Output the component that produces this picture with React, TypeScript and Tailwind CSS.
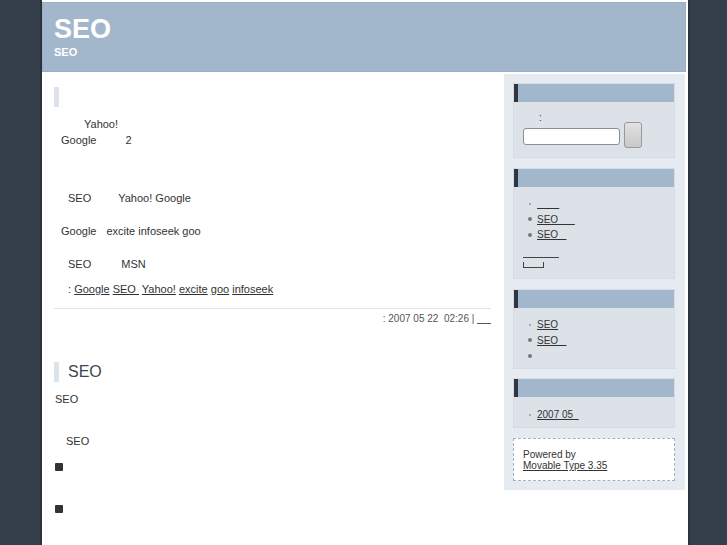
const font = { fontFamily: '"Liberation Sans", Arial, sans-serif' };

function Bar({ children }: any) {
    return (
        <div className="h-[20px] border-l-[5px] border-[#dde3ea] pl-[9px] text-[16px] leading-[20px] text-[#3d4650]">
            {children}
        </div>
    );
}

function Widget({ children, className = "" }: any) {
    return (
        <div className="border border-dotted border-[#cfd6de] bg-[#dde2e9]">
            <div className="h-[18px] border-l-[4px] border-[#2d3744] bg-[#a3b7cc]" />
            <div className={"px-[9px] text-[10px] text-[#333]" + " " + className}>{children}</div>
        </div>
    );
}

function Dot({ small }: any) {
    return (
        <span className="inline-flex w-[13px] justify-center">
            <span className={small ? "h-[2px] w-[2px] rounded-full bg-[#999]" : "h-[4px] w-[4px] rounded-full bg-[#777]"} />
        </span>
    );
}

function Square() {
    return <span className="inline-block h-[8px] w-[8px] rounded-[1px] bg-[#333]" />;
}

export default function App() {
    return (
        <div className="min-h-[545px] bg-[#353f4b]" style={font}>
            <div className="ml-[40px] h-[545px] w-[650px] border-x-2 border-[#2b333c] bg-white pt-[2px] pr-[2px]">

                <div className="h-[70px] border border-dotted border-[#93a7bc] bg-[#a3b7cc] px-[11px] pt-[11px] text-white">
                    <div className="text-[27px] font-bold leading-[30px]">SEO</div>
                    <div className="mt-[1px] text-[11px] font-bold leading-[14px]">SEO</div>
                </div>

                <div className="mt-[2px] flex">
                    <div className="ml-[12px] w-[437px] pt-[13px] text-[11px] leading-[16px] text-[#333]">
                        <Bar />
                        <p className="mt-[9px] pl-[30px]">Yahoo!</p>
                        <p className="pl-[7px]">Google<span className="pl-[29px]">2</span></p>
                        <p className="mt-[42px] pl-[14px]">SEO<span className="pl-[27px]">Yahoo! Google</span></p>
                        <p className="mt-[17px] pl-[7px]">Google<span className="pl-[10px]">excite infoseek goo</span></p>
                        <p className="mt-[17px] pl-[14px]">SEO<span className="pl-[30px]">MSN</span></p>
                        <p className="mt-[9px] pl-[14px]">
                            : <a className="underline">Google</a> <a className="underline">SEO&nbsp;</a> <a className="underline">Yahoo!</a> <a className="underline">excite</a> <a className="underline">goo</a> <a className="underline">infoseek</a>
                        </p>
                        <div className="mt-[11px] border-t border-[#dfe3e8]" />
                        <p className="mt-[2px] text-right text-[10px] text-[#555]">
                            : 2007 05 22&nbsp;&nbsp;02:26 | <a className="underline">&nbsp;&nbsp;&nbsp;&nbsp;&nbsp;</a>
                        </p>

                        <div className="mt-[35px]">
                            <Bar>SEO</Bar>
                        </div>
                        <p className="mt-[9px] pl-[1px]">SEO</p>
                        <p className="mt-[26px] pl-[12px]">SEO</p>
                        <p className="mt-[10px] pl-[1px]"><Square /></p>
                        <p className="mt-[26px] pl-[1px]"><Square /></p>
                    </div>

                    <div className="ml-[13px] h-[416px] w-[181px] bg-[#e6ebf2] pt-[9px] pl-[9px] pr-[10px]">
                        <Widget className="h-[55px]">
                            <div className="pl-[16px] pt-[10px] leading-[12px]">:</div>
                            <div className="mt-[-2px] flex items-center gap-[4px]">
                                <div className="mt-[3px] h-[17px] w-[97px] rounded-[3px] border border-[#8a8f95] bg-white" />
                                <div className="h-[26px] w-[18px] rounded-[3px] border border-[#9a9a9a] bg-gradient-to-b from-[#e2e2e2] to-[#c8c8c8]" />
                            </div>
                        </Widget>

                        <div className="mt-[10px]">
                            <Widget className="h-[91px] pt-[9px] leading-[15.5px]">
                                <div className="flex items-center"><Dot small /><a className="ml-[1px] underline">&nbsp;&nbsp;&nbsp;&nbsp;&nbsp;&nbsp;&nbsp;&nbsp;</a></div>
                                <div className="flex items-center"><Dot /><a className="ml-[1px] underline">SEO&nbsp;&nbsp;&nbsp;&nbsp;&nbsp;&nbsp;</a></div>
                                <div className="flex items-center"><Dot /><a className="ml-[1px] underline">SEO&nbsp;&nbsp;&nbsp;</a></div>
                                <div className="mt-[14px] h-[1px] w-[36px] bg-[#444]" />
                                <div className="mt-[4px] h-[6px] w-[21px] border-x border-b border-[#444]" />
                            </Widget>
                        </div>

                        <div className="mt-[10px]">
                            <Widget className="h-[60px] pt-[9px] leading-[15.5px]">
                                <div className="flex items-center"><Dot small /><a className="ml-[1px] underline">SEO</a></div>
                                <div className="flex items-center"><Dot /><a className="ml-[1px] underline">SEO&nbsp;&nbsp;&nbsp;</a></div>
                                <div className="flex h-[15px] items-center"><Dot /></div>
                            </Widget>
                        </div>

                        <div className="mt-[9px]">
                            <Widget className="h-[30px] pt-[12px] leading-[12px]">
                                <div className="flex items-center"><Dot small /><a className="ml-[1px] underline">2007 05&nbsp;&nbsp;</a></div>
                            </Widget>
                        </div>

                        <div className="mt-[10px] h-[43px] border border-dashed border-[#9fb3c8] bg-white px-[9px] pt-[10px] text-[10px] leading-[11px] text-[#333]">
                            <div>Powered by</div>
                            <a className="underline">Movable Type 3.35</a>
                        </div>
                    </div>
                </div>
            </div>
        </div>
    );
}
